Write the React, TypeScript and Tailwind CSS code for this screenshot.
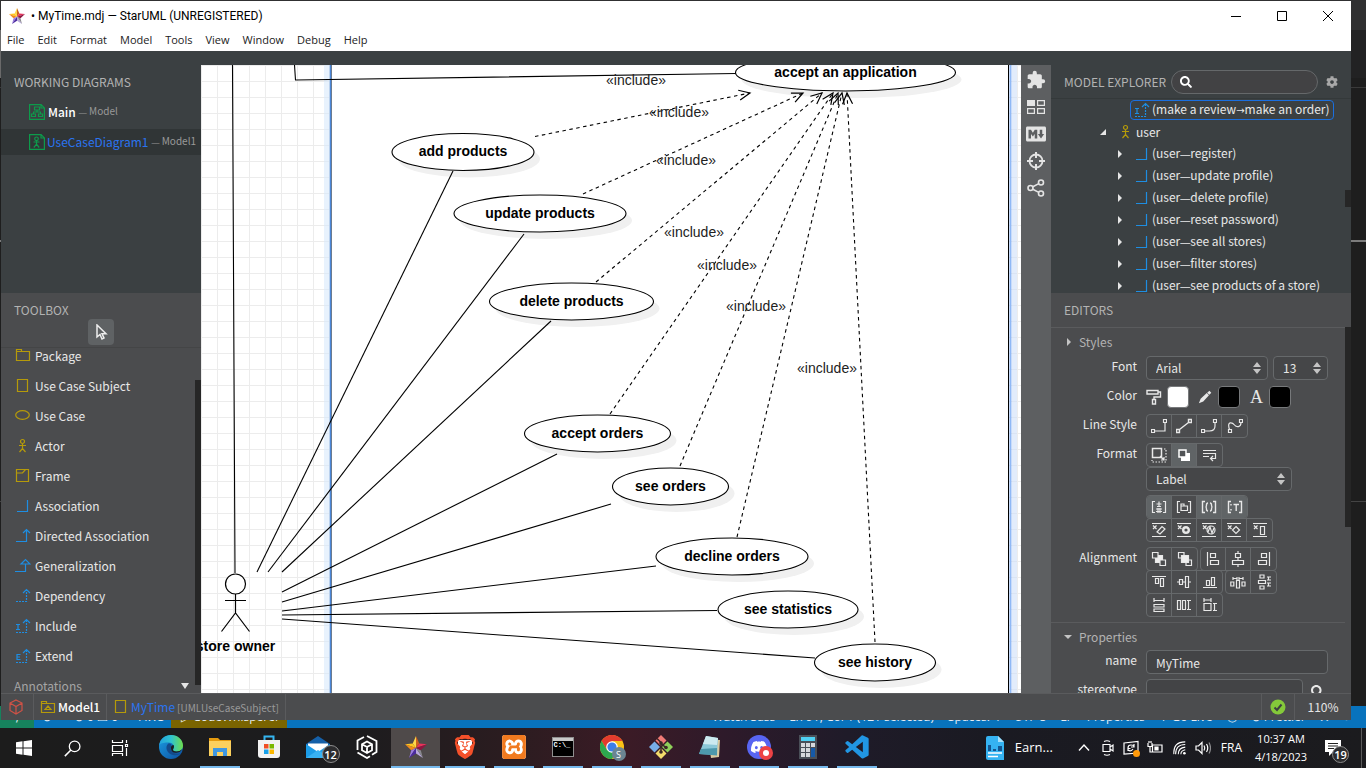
import React from "react";
import type { ReactNode } from "react";
import { FaSearch, FaCog } from "react-icons/fa";
import { MdExtension } from "react-icons/md";
import { SiBrave, SiXampp, SiDiscord } from "react-icons/si";
import { BiLogoVisualStudio } from "react-icons/bi";
import { IoLogoMarkdown } from "react-icons/io5";

const ui = "font-['Noto_Sans_CJK_SC',sans-serif]";
const sys = "font-['Open_Sans','Noto_Sans',sans-serif]";

function Svg({ className = "w-4 h-4", box = "0 0 16 16", children }: { className?: string; box?: string; children: ReactNode }) {
  return (
    <svg className={`shrink-0 ${className}`} viewBox={box} fill="none" stroke="currentColor" strokeWidth="1.2" aria-hidden="true">
      {children}
    </svg>
  );
}

/* Dashes and arrows take their proportional forms from a Latin font. */
function Label({ text, dash = "text-[10px]" }: { text: string; dash?: string }) {
  return (
    <>
      {text.split(/([—→])/).map((part, i) =>
        part === "—" || part === "→" ? (
          <span key={i} className={part === "—" ? `font-['Liberation_Sans',sans-serif] ${dash}` : "font-['DejaVu_Sans',sans-serif] text-[10px]"}>{part}</span>
        ) : (
          <React.Fragment key={i}>{part}</React.Fragment>
        ),
      )}
    </>
  );
}

function StarLogo({ className }: { className: string }) {
  return (
    <svg className={`shrink-0 ${className}`} viewBox="0 0 24 24" aria-hidden="true">
      <path d="M12 0 8.400 8.200 12 13Z" fill="#ffd84a" />
      <path d="M12 0 15.600 8.200 12 13Z" fill="#c9601e" />
      <path d="M0 9 8.400 8.200 12 13Z" fill="#ffc81e" />
      <path d="M0 9 12 13 6.800 15.500Z" fill="#f08a1c" />
      <path d="M6.800 15.500 12 13 4.500 24Z" fill="#9b7be0" />
      <path d="M4.500 24 12 13 12 19Z" fill="#4b2aa0" />
      <path d="M12 13 19.500 24 12 19Z" fill="#b8a8dc" />
      <path d="M12 13 17.200 15.500 19.500 24Z" fill="#8a8a90" />
      <path d="M24 9 15.600 8.200 12 13Z" fill="#e8325a" />
      <path d="M24 9 12 13 17.200 15.500Z" fill="#8d1640" />
    </svg>
  );
}

type Kind = "package" | "subject" | "usecase" | "actor" | "frame" | "association" | "directed" | "generalization" | "dependency" | "include" | "extend";

function ToolIcon({ kind, className = "w-4 h-4" }: { kind: Kind; className?: string }) {
  const shapes: Record<Kind, ReactNode> = {
    package: <path d="M1.500 12.500v-11h5v2h8v9zM1.500 3.500h5" />,
    subject: <path d="M2.500 1.500h10v12h-10z" />,
    usecase: <ellipse cx="7.500" cy="7" rx="6.800" ry="4.300" />,
    actor: <path d="M7.500 1.500a2 2 0 1 1 0 4 2 2 0 1 1 0-4M7.500 5.500v5M4 7.500h7M4.500 14l3-3.500 3 3.500" />,
    frame: <path d="M1.500 1.500h12v12h-12zM1.500 5h6l3-3.500" />,
    association: <path d="M2 13.500h10.500V2" />,
    directed: <path d="M1 13.500h10.500V1M8 5l3.500-3.500L15 5" />,
    generalization: <path d="M0 13.500h10.500V6M6 6l4.500-4.500L15 6z" />,
    dependency: (<><path d="M1 13.500h10.500V2" strokeDasharray="2 1" /><path d="M8 5l3.500-3.500L15 5" /></>),
    include: (<><path d="M1 14.500h10.500V2" strokeDasharray="2 1" /><path d="M8 5l3.500-3.500L15 5M1 6.500h4M3 6.500v5M1 11.500h4" /></>),
    extend: (<><path d="M1 14.500h10.500V2" strokeDasharray="2 1" /><path d="M8 5l3.500-3.500L15 5M5.500 6.500H2v5h3.500M2 9h3" /></>),
  };
  const yellow = ["package", "subject", "usecase", "actor", "frame"].includes(kind);
  return (
    <span className={yellow ? "text-[#b59a0a]" : "text-[#1e8ee2]"}>
      <Svg className={className}>{shapes[kind]}</Svg>
    </span>
  );
}

const tools: [Kind, string][] = [
  ["package", "Package"], ["subject", "Use Case Subject"], ["usecase", "Use Case"], ["actor", "Actor"], ["frame", "Frame"],
  ["association", "Association"], ["directed", "Directed Association"], ["generalization", "Generalization"],
  ["dependency", "Dependency"], ["include", "Include"], ["extend", "Extend"],
];

function LeftPanel() {
  return (
    <aside className="flex w-[200px] shrink-0 flex-col text-[12px] leading-5 text-[#e8e8e8]">
      <section className="h-[228px] shrink-0 bg-[#3b4042]">
        <h2 className="px-[13px] pt-[7px] pb-[7px] text-[#b3b3b3]">WORKING DIAGRAMS</h2>
        <ul>
          <li>
            <a href="#main" className="flex h-[26px] items-center whitespace-nowrap pl-7">
              <span className="text-[#0d9b4b]"><Svg className="w-4 h-4"><path d="M.6.6h11.500l3.300 3.300v11.500H.6zM12 .6v3.400h3.400M5.500 3h5v3h-5zM8 6v2M4.500 10V8h7v2M2.500 10h4v2.500h-4zM9.500 10h4v2.500h-4z" /></Svg></span>
              <span className="ml-[3px] font-medium text-white">Main</span>
              <span className="ml-[3px] text-[10px] text-[#999]"><Label text="— Model" dash="text-[8px]" /></span>
            </a>
          </li>
          <li>
            <a href="#usecase" className="mt-1 flex h-[26px] items-center whitespace-nowrap bg-[#303536] pl-7">
              <span className="text-[#0d9b4b]"><Svg className="w-4 h-4"><path d="M.6.6h11.500l3.300 3.300v11.500H.6zM12 .6v3.400h3.400M7.500 3a1.800 1.800 0 1 1 0 3.600 1.800 1.800 0 1 1 0-3.600M7.500 6.600v3.600M4.500 8h6M4.800 13.500l2.700-3.300 2.700 3.300" /></Svg></span>
              <span className="ml-[2px] text-[#2a74f0]">UseCaseDiagram1</span>
              <span className="ml-[3px] text-[10px] text-[#999]"><Label text="— Model1" dash="text-[8px]" /></span>
            </a>
          </li>
        </ul>
      </section>
      <section className="flex min-h-0 flex-1 flex-col bg-[#4b4c4e]">
        <div className="flex h-[55px] shrink-0 flex-col border-b border-[#444546]">
          <h2 className="px-[13px] pt-[7px] text-[#b3b3b3]">TOOLBOX</h2>
          <button aria-label="Select" className="-mt-px flex size-[26px] items-center justify-center self-center rounded bg-[#5f6264] text-[#eee]">
            <Svg className="w-4 h-4"><path d="M4 1v12l3-2.500 2 4.500 2-1-2-4.200h4z" strokeWidth="1.500" /></Svg>
          </button>
        </div>
        <div className="flex min-h-0 flex-1 overflow-hidden">
          <div className="-mt-[7px] flex-1">
            <ul>
              {tools.map(([kind, name]) => (
                <li key={name}>
                  <button className="flex h-[30px] w-full items-center gap-1 whitespace-nowrap pl-[14px]">
                    <ToolIcon kind={kind} /> <span>{name}</span>
                  </button>
                </li>
              ))}
            </ul>
            <button className="flex h-[30px] w-full items-center justify-between pl-[13px] pr-[6px] text-[#a5a5a5]">
              Annotations
              <svg className="w-2 h-2 text-[#e6e6e6]" viewBox="0 0 8 8" aria-hidden="true"><path d="M0 1h8L4 7z" fill="currentColor" /></svg>
            </button>
          </div>
          <div className="mt-8 mb-2 w-[6px] shrink-0 bg-[#262626]" />
        </div>
      </section>
    </aside>
  );
}

type Node = [string, number, number, number];
const nodes: Node[] = [
  ["accept an application", 845.5, 72.5, 110],
  ["add products", 463, 152, 71],
  ["update products", 540, 213.5, 86],
  ["delete products", 571.5, 301.5, 82],
  ["accept orders", 597.5, 433.5, 73],
  ["see orders", 670.5, 486.5, 58],
  ["decline orders", 732, 556.5, 76],
  ["see statistics", 788, 609.5, 70],
  ["see history", 875, 662.5, 60.5],
];
const links = [
  [257, 572, 453, 171], [268, 572, 524, 234], [282, 572, 551, 321], [282, 592, 557, 454],
  [282, 602, 611, 504], [282, 611, 656, 566], [282, 615, 717, 610.5], [282, 619, 815, 658],
];
const includes = [
  [535, 136.5, 750, 93, 636, 80], [583, 194, 803, 93, 679, 112], [596, 282, 822, 93, 686, 160], [610, 414, 833, 93, 694, 232],
  [680, 466, 838, 93, 727, 265], [737, 537, 842, 93, 756, 306], [875, 642, 847, 93, 827, 368],
];

function Canvas() {
  return (
    <main className="min-w-0 flex-1 overflow-hidden bg-white">
      <svg className="h-[628px] w-[820px]" viewBox="201 65 820 628" fontFamily="'Liberation Sans', Arial, sans-serif" fontSize="14" role="img" aria-label="Use case diagram">
        <defs>
          <pattern id="grid" x="217" y="81" width="16" height="16" patternUnits="userSpaceOnUse">
            <path d="M.5 0V16M0 .5H16" stroke="#ececec" />
          </pattern>
          <marker id="open" viewBox="-14 -7 16 14" markerWidth="16" markerHeight="14" refX="0" refY="0" markerUnits="userSpaceOnUse" orient="auto">
            <path d="M-11-5 0 0-11 5" fill="none" stroke="#000" strokeWidth="1.200" />
          </marker>
        </defs>
        <rect x="201" y="65" width="820" height="628" fill="#fff" />
        <rect x="201" y="65" width="820" height="628" fill="url(#grid)" />
        <rect x="324" y="65" width="7" height="628" fill="#d8eafb" opacity=".6" />
        <rect x="331" y="65" width="678" height="628" fill="#fff" />
        <rect x="1012" y="65" width="5" height="628" fill="#cfe0f8" opacity=".6" />
        <path d="M331.500 65v628" stroke="#777" />
        <path d="M330.500 65v628" stroke="#4a86d8" strokeWidth="1.500" />
        <path d="M1010.500 65v628" stroke="#8fb8f5" strokeWidth="2" />
        <path d="M1008.500 65v628" stroke="#000" />
        {nodes.map(([name, x, y, rx]) => <ellipse key={name} cx={x + 6} cy={y + 7} rx={rx} ry="18.500" fill="#f0f0f0" />)}
        <g fill="none" stroke="#000" strokeWidth="1.100">
          <path d="M232.500 65 235 573M294.500 65 295.500 80 736 73.500" />
          {links.map(([a, b, c, d]) => <line key={d} x1={a} y1={b} x2={c} y2={d} />)}
        </g>
        {nodes.map(([name, x, y, rx]) => (
          <g key={name}>
            <ellipse cx={x} cy={y} rx={rx} ry="18.500" fill="#fff" stroke="#000" strokeWidth="1.100" />
            <text x={x} y={y + 4} textAnchor="middle" fontWeight="bold">{name}</text>
          </g>
        ))}
        {includes.map(([a, b, c, d, tx, ty]) => (
          <g key={tx}>
            <line x1={a} y1={b} x2={c} y2={d} stroke="#000" strokeWidth="1.100" strokeDasharray="3.500 3.500" markerEnd="url(#open)" />
            <text x={tx} y={ty + 5} textAnchor="middle" fill="#222">«include»</text>
          </g>
        ))}
        <g fill="none" stroke="#000" strokeWidth="1.200">
          <circle cx="235.500" cy="584" r="10" fill="#fff" />
          <path d="M235.500 594v19M225 600.500h21M221.500 631.500l14-18.500 14 18.500" />
        </g>
        <text x="235.500" y="651" textAnchor="middle" fontWeight="bold">store owner</text>
      </svg>
    </main>
  );
}

function ToolStrip() {
  const b = "flex h-[27px] w-full items-center justify-center";
  return (
    <nav className="flex w-[30px] shrink-0 flex-col bg-[#5d5f61] pt-px text-[#e4e4e4]" aria-label="Views">
      <button className={b} aria-label="Extensions"><MdExtension className="size-5" /></button>
      <button className={b} aria-label="Thumbnails"><Svg className="w-[18px] h-[14px]" box="0 0 18 14"><path d="M0 0h8v6H0z" fill="currentColor" stroke="none" /><path d="M10.600.6h6.800v4.800h-6.800zM.6 8.600h6.800v4.800H.6zM10.600 8.600h6.800v4.800h-6.800z" /></Svg></button>
      <button className={b} aria-label="Documentation"><IoLogoMarkdown className="size-5" /></button>
      <button className={b} aria-label="Minimap"><Svg className="w-[18px] h-[18px]" box="0 0 18 18"><circle cx="9" cy="9" r="6.500" strokeWidth="1.800" /><path d="M9 0v6M9 12v6M0 9h6M12 9h6" strokeWidth="2" /></Svg></button>
      <button className={b} aria-label="Relationships"><Svg className="w-[18px] h-[18px]" box="0 0 18 18"><circle cx="3.500" cy="9" r="2.500" strokeWidth="1.600" /><circle cx="14" cy="3.500" r="2.500" strokeWidth="1.600" /><circle cx="14" cy="14.500" r="2.500" strokeWidth="1.600" /><path d="M5.800 7.800l6-3.200M5.800 10.200l6 3.200" strokeWidth="1.600" /></Svg></button>
    </nav>
  );
}

const relations = ["register", "update profile", "delete profile", "reset password", "see all stores", "filter stores", "see products of a store"];

function Explorer() {
  return (
    <section className="flex h-[228px] shrink-0 flex-col bg-[#3b4042]">
      <div className="flex h-[34px] shrink-0 items-center border-b border-[#34393a] pl-[13px] pr-[13px] text-[#b3b3b3]">
        <h2 className="shrink-0 whitespace-nowrap">MODEL EXPLORER</h2>
        <label className="ml-[5px] flex h-6 min-w-0 flex-1 items-center rounded-full border border-[#65686a] bg-[#424244] pl-2 text-white">
          <FaSearch className="size-3 shrink-0" />
          <input aria-label="Search" className="ml-2 min-w-0 flex-1 bg-transparent outline-none" />
        </label>
        <button aria-label="Settings" className="ml-2 text-[#a8a8a8]"><FaCog className="size-3" /></button>
      </div>
      <div className="flex min-h-0 flex-1 overflow-hidden">
        <ul className="min-w-0 flex-1 whitespace-nowrap">
          <li className="flex h-[22px] items-center pl-[79px]">
            <button className="flex h-5 items-center gap-[2px] rounded-sm border border-[#1a6fe0] px-[3px]"><ToolIcon kind="include" /><span><Label text="(make a review→make an order)" /></span></button>
          </li>
          <li className="flex h-[22px] items-center pl-[49px]">
            <svg className="h-[6px] w-[6px]" viewBox="0 0 6 6" aria-hidden="true"><path d="M6 0v6H0z" fill="#e6e6e6" /></svg>
            <span className="ml-3"><ToolIcon kind="actor" /></span><span className="ml-[2px]">user</span>
          </li>
          {relations.map((r) => (
            <li key={r} className="flex h-[22px] items-center pl-[67px]">
              <svg className="h-2 w-1" viewBox="0 0 4 8" aria-hidden="true"><path d="M0 0l4 4-4 4z" fill="#e6e6e6" /></svg>
              <span className="ml-3"><ToolIcon kind="association" /></span>
              <span className="ml-[2px]"><Label text={`(user—${r})`} /></span>
            </li>
          ))}
        </ul>
        <div className="mt-[91px] h-[17px] w-[6px] shrink-0 bg-[#262626]" />
      </div>
    </section>
  );
}

function Row({ label, children }: { label: string; children: ReactNode }) {
  return (
    <div className="flex">
      <span className="w-[86px] shrink-0 text-right">{label}</span>
      <div className="ml-[9px] flex min-w-0 flex-1 flex-col">{children}</div>
    </div>
  );
}

function Picker({ label, value, className }: { label: string; value: string; className: string }) {
  return (
    <div className={`relative h-6 ${className}`}>
      <select aria-label={label} className="h-full w-full appearance-none rounded border border-[#66696b] bg-[#454648] pl-[9px] text-[#e6e6e6]" defaultValue={value}>
        <option>{value}</option>
      </select>
      <svg className="pointer-events-none absolute right-[7px] top-[6px] h-3 w-2" viewBox="0 0 8 12" aria-hidden="true"><path d="M0 5l4-5 4 5zM0 7l4 5 4-5z" fill="#c4c4c4" /></svg>
    </div>
  );
}

type Tool = { name: string; on?: boolean; icon: ReactNode };
function Group({ items }: { items: Tool[] }) {
  return (
    <div className="flex h-6 divide-x divide-[#66696b] overflow-hidden rounded border border-[#66696b]">
      {items.map((t) => (
        <button key={t.name} aria-label={t.name} className={`flex w-[25px] items-center justify-center ${t.on ? "bg-[#606466]" : ""}`}>
          <Svg className="w-4 h-4">{t.icon}</Svg>
        </button>
      ))}
    </div>
  );
}

const bar = "M1 1.500h14M1 14.500h14M2 3.500l3.500 3.500M5.500 3.500 2 7";
const lineTools: Tool[] = [
  { name: "Rectilinear", icon: <path d="M.5 11.500h3v3h-3zM12.500 1.500h3v3h-3zM3.500 13h10.500V4.500" /> },
  { name: "Oblique", icon: <path d="M.5 11.500h3v3h-3zM12.500 1.500h3v3h-3zM3.500 11.500l9-7" strokeWidth="1.400" /> },
  { name: "Rounded", icon: <path d="M.5 11.500h3v3h-3zM12.500 1.500h3v3h-3zM3.500 13h5q5.500 0 5.500-5V4.500" /> },
  { name: "Curve", icon: <path d="M1.500 11.500h3v3h-3zM12.500 1.500h3v3h-3zM2.500 11.500c-3-9 3-7 5-4.500s6.500 2.500 6.500-2.500" /> },
];
const formatTools: Tool[] = [
  { name: "Auto resize", icon: (<><path d="M1.500 1.500h9v9h-9z" strokeWidth="1.500" /><path d="M13 2h2v13H1v-2" strokeDasharray="1.500 1.500" /><path d="M9 9l4 4M13 10v3h-3" /></>) },
  { name: "Shadow", on: true, icon: (<><path d="M5 6h9v8H5z" fill="#fff" stroke="none" /><path d="M3 3h7v7H3z" fill="#505355" stroke="#fff" strokeWidth="1.500" /></>) },
  { name: "Word wrap", icon: <path d="M1 3.500h13M1 6.500h12.500v5H9M1 9.500h6M11 9l-2.500 2.500L11 14" /> },
];
const showTools: Tool[] = [
  { name: "Show visibility", on: true, icon: <path d="M4 2.500H1.500v11H4M12 2.500h2.500v11H12M8 2.500v5M5.500 5h5M6 7.500h4M5 10h6M5 12.500h6M7 9v5M9 9v5" /> },
  { name: "Show namespace", icon: <path d="M4 2.500H1.500v11H4M12 2.500h2.500v11H12M5 11.500V5h3v2h3.500v4.500zM5 7h3" /> },
  { name: "Show property", on: true, icon: <path d="M4 2.500H1.500v11H4M12 2.500h2.500v11H12M7 4q-1.500 0-1.500 2T4.500 8q1 0 1 2T7 12M9 4q1.500 0 1.500 2T11.500 8q-1 0-1 2T9 12" strokeWidth="1.400" /> },
  { name: "Show type", on: true, icon: <path d="M4 2.500H1.500v11H4M12 2.500h2.500v11H12M6.500 5.500h5.500M9.200 5.500V12M4 5v1.500M4 10v1.500" strokeWidth="1.400" /> },
];
const suppressTools: Tool[] = [
  { name: "Suppress attributes", icon: <><path d={bar} /><path d="M6 10l5-5.500 3 2.500-5 5z" /></> },
  { name: "Suppress operations", icon: <><path d={bar} /><circle cx="10" cy="8" r="2.800" strokeWidth="2.400" /></> },
  { name: "Suppress receptions", icon: <><path d={bar} /><circle cx="10" cy="8" r="4" /><path d="M7 10l2-5 2 6 2-5" /></> },
  { name: "Suppress literals", icon: <><path d={bar} /><path d="M10 4.500 13.500 8 10 11.500 6.500 8z" /></> },
  { name: "Suppress columns", icon: <><path d={bar} /><path d="M8.500 4.500h4v8h-4z" /></> },
];
const orderTools: Tool[] = [
  { name: "Send to back", icon: <><path d="M4.500 4.500h7v7h-7z" fill="#eee" /><path d="M1.500 1.500h5.500v5.500H1.500zM9 9h5.500v5.500H9z" fill="#4b4c4e" /></> },
  { name: "Bring to front", icon: <><path d="M1.500 1.500h5.500v5.500H1.500zM9 9h5.500v5.500H9z" /><path d="M4.500 4.500h7v7h-7z" fill="#eee" /></> },
];
const alignH: Tool[] = [
  { name: "Align left", icon: <path d="M2.500 1v14M5.500 2.500h5v4h-5zM5.500 9.500h8v4h-8z" /> },
  { name: "Align center", icon: <path d="M8 0v2.500M8 6.500v3M8 13.500V16M5.500 2.500h5v4h-5zM2.500 9.500h11v4h-11z" /> },
  { name: "Align right", icon: <path d="M13.500 1v14M5.500 2.500h5v4h-5zM2.500 9.500h8v4h-8z" /> },
];
const alignV: Tool[] = [
  { name: "Align top", icon: <path d="M1 2.500h14M4.500 4.500h3v5h-3zM9.500 4.500h3v8h-3z" /> },
  { name: "Align middle", icon: <path d="M1 8h2M7 8h2.500M13 8h2M3.500 5.500h3v5h-3zM9.500 2.500h3v11h-3z" /> },
  { name: "Align bottom", icon: <path d="M1 13.500h14M4.500 6.500h3v5h-3zM9.500 3.500h3v8h-3z" /> },
];
const space: Tool[] = [
  { name: "Space horizontally", icon: <path d="M.8 8h3v4h-3zM6.500 6.500h3V14h-3zM12 8h3v4h-3zM3 4.500h4M9 4.500h4M3 3v3M7 3v3M9 3v3M13 3v3" /> },
  { name: "Space vertically", icon: <path d="M4 1h4v3H4zM2.500 6.500h7v3h-7zM4 12h4v3H4zM11 3h4M11 6h4M11 9h4M11 12h4M12.500 3v3M12.500 9v3" /> },
];
const sizes: Tool[] = [
  { name: "Same width", icon: <path d="M3 7.500h10v2.500H3zM3 12h10v2.500H3zM3 3.500h10M3 1v4M13 1v4" /> },
  { name: "Same height", icon: <path d="M1.500 3.500h3v9h-3zM6.500 3.500h3v9h-3zM11 3.500h4M11 12.500h4M12.500 3.500v9" /> },
  { name: "Same size", icon: <path d="M2 6.500h7v7H2zM2 1v4M9 1v4M2 3h7M11 6.500h4M11 13.500h4M12.500 6.500v7" /> },
];

function Editors() {
  const swatch = "size-[22px] rounded border border-[#77797b]";
  return (
    <section className="flex min-h-0 flex-1 flex-col bg-[#4b4c4e]">
      <h2 className="h-[34px] shrink-0 px-[13px] pt-[7px] text-[#b3b3b3]">EDITORS</h2>
      <div className="flex min-h-0 flex-1 overflow-hidden">
        <div className="min-w-0 flex-1 border-t border-[#5a5b5d]">
          <button className="flex h-[28px] items-center gap-2 pl-4 text-[#b3b3b3]">
            <svg className="h-2 w-1" viewBox="0 0 4 8" aria-hidden="true"><path d="M0 0l4 4-4 4z" fill="#c4c4c4" /></svg>Styles
          </button>
          <div className="flex flex-col gap-[5px]">
            <Row label="Font"><div className="flex gap-[5px]"><Picker label="Font" value="Arial" className="w-[122px]" /><Picker label="Font size" value="13" className="w-[55px]" /></div></Row>
            <Row label="Color">
              <div className="flex h-6 items-center">
                <Svg className="w-4 h-4"><path d="M1 1.500h11v3.500H1zM12 3h2.500v5H8v2.500M6.500 10.500h3V15h-3z" strokeWidth="1.400" /></Svg>
                <button aria-label="Fill color" className={`ml-[5px] bg-white ${swatch}`} />
                <span className="ml-[9px]"><Svg className="w-[14px] h-[14px]"><path d="M1 15l2-5 7-6.500L12.500 6 6 13zM10.500 3 13 .800 15.200 3 13 5.500z" fill="currentColor" stroke="none" /></Svg></span>
                <button aria-label="Line color" className={`ml-[6px] bg-black ${swatch}`} />
                <span className="ml-[9px] w-[15px] text-center font-['Liberation_Serif',serif] text-[18px] leading-5">A</span>
                <button aria-label="Font color" className={`ml-[5px] bg-black ${swatch}`} />
              </div>
            </Row>
            <Row label="Line Style"><div className="flex"><Group items={lineTools} /></div></Row>
            <Row label="Format">
              <div className="flex"><Group items={formatTools} /></div>
              <Picker label="Stereotype display" value="Label" className="w-[146px]" />
              <div className="mt-1 flex"><Group items={showTools} /></div>
              <div className="-mt-px flex"><Group items={suppressTools} /></div>
            </Row>
            <Row label="Alignment">
              <div className="flex gap-[2px]"><Group items={orderTools} /><Group items={alignH} /></div>
              <div className="-mt-px flex gap-[2px]"><Group items={alignV} /><Group items={space} /></div>
              <div className="-mt-px flex"><Group items={sizes} /></div>
            </Row>
          </div>
          <div className="mt-[5px] flex h-[28px] items-center gap-[7px] border-t border-[#5a5b5d] pl-[13px] text-[#b3b3b3]">
            <svg className="h-1 w-2" viewBox="0 0 8 4" aria-hidden="true"><path d="M0 0h8L4 4z" fill="#c4c4c4" /></svg>Properties
          </div>
          <div className="flex flex-col gap-[5px]">
            <Row label="name"><input aria-label="name" defaultValue="MyTime" className="h-6 w-[182px] rounded border border-[#66696b] bg-[#434446] px-[9px]" /></Row>
            <Row label="stereotype"><div className="flex items-center gap-2"><input aria-label="stereotype" className="h-6 w-[157px] rounded border border-[#66696b] bg-[#434446] px-2" /><FaSearch className="size-[13px]" /></div></Row>
          </div>
        </div>
        <div className="h-[200px] w-[6px] shrink-0 bg-[#262626]" />
      </div>
    </section>
  );
}

function StatusBar() {
  const cell = "flex h-full items-center border-r border-[#5a5b5d]";
  return (
    <footer className="flex h-[27px] shrink-0 items-center whitespace-nowrap border-t border-[#5a5b5d] bg-[#4b4c4e] text-[12px] text-[#e6e6e6]">
      <div className={`${cell} w-[33px] pl-[7px] text-[#cf5246]`}><Svg className="w-4 h-4"><path d="M8 1l6 3v7.500L8 15l-6-3.500V4zM2 4l6 3.500L14 4M8 7.500V15" /></Svg></div>
      <a href="#model" className={`${cell} px-[6px]`}>
        <span className="text-[#b59a0a]"><Svg className="w-4 h-4"><path d="M1.500 13.500v-11h5v2h8v9zM1.500 4.500h6M5 10.500h6L8 7z" /></Svg></span>
        <span className="ml-[2px] font-medium text-white">Model1</span>
      </a>
      <a href="#mytime" className={`${cell} px-[6px]`}>
        <ToolIcon kind="subject" /><span className="ml-[2px] text-[#2a74f0]">MyTime</span><span className="ml-[2px] text-[10px] text-[#999]">[UMLUseCaseSubject]</span>
      </a>
      <div className="ml-auto flex h-full w-[33px] items-center justify-center border-l border-[#5a5b5d]">
        <svg className="h-4 w-4" viewBox="0 0 16 16" role="img" aria-label="Valid"><circle cx="8" cy="8" r="7.500" fill="#84c93a" /><path d="M4.500 8.500 7 11l4.500-5.500" fill="none" stroke="#3c4040" strokeWidth="2" /></svg>
      </div>
      <div className="flex h-full w-[57px] items-center justify-center border-l border-[#5a5b5d]">110%</div>
    </footer>
  );
}

function StarWindow() {
  return (
    <div className={`absolute bottom-2 left-px right-[15px] top-px flex flex-col overflow-hidden bg-white ${ui}`}>
      <header className="flex h-[29px] shrink-0 items-center pl-2 font-['Roboto',sans-serif] text-black">
        <StarLogo className="h-4 w-4" />
        <h1 className="ml-[6px] whitespace-nowrap text-[12px]">• MyTime.mdj — StarUML (UNREGISTERED)</h1>
        <div className="ml-auto flex h-full">
          <button aria-label="Minimize" className="flex w-[46px] items-center justify-center"><Svg className="w-[10px] h-[10px]" box="0 0 10 10"><path d="M0 5.500h10" strokeWidth="1" /></Svg></button>
          <button aria-label="Maximize" className="flex w-[46px] items-center justify-center"><Svg className="w-[10px] h-[10px]" box="0 0 10 10"><path d="M.5.5h9v9h-9z" strokeWidth="1" /></Svg></button>
          <button aria-label="Close" className="flex w-[46px] items-center justify-center"><Svg className="w-[10px] h-[10px]" box="0 0 10 10"><path d="M0 0l10 10M10 0 0 10" strokeWidth="1" /></Svg></button>
        </div>
      </header>
      <nav className={`flex h-[21px] shrink-0 items-center gap-[13px] pl-[6px] text-[11px] text-[#222] ${sys}`}>
        {["File", "Edit", "Format", "Model", "Tools", "View", "Window", "Debug", "Help"].map((m) => <button key={m}>{m}</button>)}
      </nav>
      <div className="h-[14px] shrink-0 bg-[#3b4042]" />
      <div className="flex min-h-0 flex-1">
        <LeftPanel />
        <Canvas />
        <ToolStrip />
        <aside className="flex w-[300px] shrink-0 flex-col text-[12px] leading-5 text-[#e8e8e8]"><Explorer /><Editors /></aside>
      </div>
      <StatusBar />
    </div>
  );
}

function EditorBackdrop() {
  return (
    <div className={`flex h-full flex-col bg-[#1e1e1e] ${sys}`}>
      <div className="h-[30px] shrink-0 bg-[#303031]" />
      <div className="h-12 shrink-0 bg-[linear-gradient(to_right,#6a6a6a_2px,#222223_2px)]" />
      <div className="h-[10px] shrink-0 border-b border-[#3a3a3a] bg-[#1e1e1e]" />
      <div className="h-[154px] shrink-0 border-b-2 border-[#7c7c7c]" />
      <div className="h-[260px] shrink-0 border-b border-[#444]" />
      <div className="flex-1" />
      <footer className="flex h-[22px] shrink-0 items-center whitespace-nowrap bg-[#0873bd] text-[12px] leading-[22px] text-[#e8eef4]">
        <span className="flex h-full w-[34px] items-center justify-center bg-[#16825d]">⟩</span>
        <span className="ml-2 w-8">⊕</span>
        <span className="w-[65px]">⊗ 0 ⚠ 0</span>
        <span className="w-8">AWS</span>
        <span className="flex h-full w-[116px] items-center bg-[#7a6400] pl-[10px]">▷ CodeWhisperer</span>
        <span className="ml-3">✎</span>
        <div className="ml-auto flex items-center gap-[14px] pr-4">
          <span>Watch Sass</span><span>Ln 91, Col 1 (121 selected)</span><span>Spaces: 4</span><span>UTF-8</span><span>LF</span><span>Properties</span><span>Ψ Go Live</span><span>◎</span><span>⊘ Prettier</span><span>⋏</span><span>●</span>
        </div>
      </footer>
    </div>
  );
}

function TaskApp({ name, running, active, children }: { name: string; running?: boolean; active?: boolean; children: ReactNode }) {
  return (
    <button aria-label={name} className={`flex h-10 w-[49px] shrink-0 flex-col items-center ${active ? "bg-[#4f4a4a]" : ""}`}>
      <span className="flex flex-1 items-center">{children}</span>
      <span className={`h-[2px] ${active ? "w-full" : "w-10"} ${running || active ? "bg-[#76b9ed]" : ""}`} />
    </button>
  );
}

const art = "h-6 w-6 shrink-0";
function Taskbar() {
  return (
    <footer className={`flex h-10 shrink-0 items-center bg-[linear-gradient(to_right,#1c1c1c_0%,#1c1c1e_26%,#2c1c20_38%,#3b1b26_46%,#2e1a2a_53%,#1f1b29_62%,#1a1a22_72%,#1b1b1e_100%)] text-white ${sys}`}>
      <button aria-label="Start" className="flex w-12 justify-center"><Svg className="w-4 h-4"><path d="M0 2.200l6.500-.9v6.200H0zM7.500 1.200 16 0v7.500H7.500zM0 8.500h6.500v6.200L0 13.800zM7.500 8.500H16V16l-8.500-1.200z" fill="#fff" stroke="none" /></Svg></button>
      <button aria-label="Search" className="flex w-12 justify-center"><Svg className="w-[17px] h-[17px]"><circle cx="10" cy="6" r="5" /><path d="M6.500 9.500.8 15.200" strokeWidth="1.400" /></Svg></button>
      <button aria-label="Task view" className="mr-[2px] flex w-12 justify-center"><Svg className="w-[18px] h-4" box="0 0 18 16"><path d="M1.500 0v2.500h10V0M1.500 5.500h10v6h-10zM1.500 16v-2.500h10V16M15.500 0v3M15.500 8v8M14.500 4.500h2v2h-2z" /></Svg></button>
      <TaskApp name="Edge">
        <svg className={art} viewBox="0 0 24 24"><defs><linearGradient id="edge-top" x1="0" x2="1"><stop stopColor="#22a0de" /><stop offset=".5" stopColor="#2fc3d0" /><stop offset="1" stopColor="#6fdd4b" /></linearGradient><linearGradient id="edge-low" x1="0" x2="1" y2="1"><stop stopColor="#1b9de2" /><stop offset="1" stopColor="#0c4fa0" /></linearGradient></defs><circle cx="12" cy="12" r="12" fill="url(#edge-low)" /><path d="M0 10.500C1 4 6 0 12 0c7 0 12 5 12 10.500 0 4-3 6-6.500 6-3 0-4.200-1.200-3.200-2.500 2.200-3-.8-6.500-4.500-6.500S2 7.500 0 10.500z" fill="url(#edge-top)" /><path d="M9.500 8.500c-4 3-2 10 4.500 11.500 3.500.8 6.500-.5 8.500-2-2 1-9 1.500-10.500-3.500-.6-2 .8-3.500.5-4.500s-2-2-3-1.500z" fill="#134b8c" /><path d="M12 13.500c-.5-2 1-3.500 2.500-3.500 1 1.500.2 3-.3 4-.8 1.500.6 2.500 3.300 2.500 2 0 4-.7 5.500-2.500-1 3-4 4-6.500 3.800-3 0-4.300-2-4.500-4.300z" fill="#1c1c1c" /></svg>
      </TaskApp>
      <TaskApp name="File Explorer" running>
        <svg className={art} viewBox="0 0 24 24"><path d="M1 3h9l2 2h11v16H1z" fill="#e59b0f" /><path d="M1 6h22v15H1z" fill="#fbd05e" /><path d="M5 21v-8h14v8h-4v-4H9v4z" fill="#3f97e0" /></svg>
      </TaskApp>
      <TaskApp name="Store">
        <svg className={art} viewBox="0 0 24 24"><path d="M7.500 6V1.500h9V6" fill="none" stroke="#35b5f0" strokeWidth="2" /><path d="M1 5h22v15q0 3-3 3H4q-3 0-3-3z" fill="#f2f2f2" /><path d="M7 9h4.500v4.500H7z" fill="#f04e24" /><path d="M12.500 9H17v4.500h-4.500z" fill="#7ab800" /><path d="M7 14.500h4.500V19H7z" fill="#18a0ea" /><path d="M12.500 14.500H17V19h-4.500z" fill="#fcb800" /></svg>
      </TaskApp>
      <TaskApp name="Mail">
        <span className="relative flex">
          <svg className="h-6 w-6" viewBox="0 0 24 24"><path d="M0 9 12 1l12 8v14H0z" fill="#1560a8" /><path d="M2 8.500h20V14l-10 5-10-5z" fill="#fff" /><path d="M0 9l12 8 12-8v14H0z" fill="#1c9ce8" /><path d="M0 23 12 15l12 8z" fill="#38b2f4" /></svg>
          <span className="absolute -bottom-1 -right-[10px] flex size-[18px] items-center justify-center rounded-full border border-[#8b8b8b] bg-[#2c2c2e] text-[11px] font-semibold leading-none">12</span>
        </span>
      </TaskApp>
      <TaskApp name="Package manager">
        <Svg className="h-6 w-6" box="0 0 24 24"><path d="M12 6.500l5 2.800v6L12 18l-5-2.700v-6zM7 9.300l5 2.700 5-2.700M12 12v6" strokeWidth="1.800" /><path d="M9 2 2.500 5.500V15M12 1l9.500 5v11L17 19.800M2.500 17.500 12 23l3-1.800" strokeWidth="1.800" /></Svg>
      </TaskApp>
      <TaskApp name="StarUML" active><StarLogo className="h-[22px] w-[22px]" /></TaskApp>
      <TaskApp name="Brave" running><span className="relative flex"><span className="absolute inset-[5px] bg-white" /><SiBrave className="relative h-6 w-6 text-[#f4502a]" /></span></TaskApp>
      <TaskApp name="XAMPP" running><span className="flex rounded-[3px] bg-white"><SiXampp className="h-6 w-6 text-[#f17a1f]" /></span></TaskApp>
      <TaskApp name="Command Prompt" running>
        <span className="flex h-5 w-[22px] flex-col border border-[#8f8f8f] bg-black"><span className="h-[3px] bg-[#c9c9c9]" /><span className="px-px text-left font-['Liberation_Mono',monospace] text-[7px] font-bold leading-[9px]">C:\_</span></span>
      </TaskApp>
      <TaskApp name="Chrome" running>
        <span className="relative flex">
          <svg className="h-6 w-6" viewBox="0 0 24 24"><circle cx="12" cy="12" r="12" fill="#fbc116" /><path d="M1.600 6A12 12 0 0 1 22.400 6H12L7 15z" fill="#e33b2e" /><path d="M1.600 6A12 12 0 0 0 12 24l5.200-9H7z" fill="#2da94f" /><circle cx="12" cy="12" r="5.800" fill="#fff" /><circle cx="12" cy="12" r="4.600" fill="#3d7ee8" /></svg>
          <span className="absolute -bottom-[2px] -right-[2px] flex size-[14px] items-center justify-center rounded-full bg-[#6b8592] text-[9px] leading-none">S</span>
        </span>
      </TaskApp>
      <TaskApp name="Git Bash" running>
        <svg className={art} viewBox="0 0 24 24"><path d="M12 0l5.500 5.500L12 11 6.500 5.500z" fill="#f07a76" /><path d="M5.500 6.500 11 12l-5.500 5.500L0 12z" fill="#78aee8" /><path d="M18.500 6.500 24 12l-5.500 5.500L13 12z" fill="#8fd05a" /><path d="M12 13l5.500 5.500L12 24l-5.500-5.500z" fill="#f4dc6c" /><path d="M8 3.500l4 4v10M12 8l5 5" fill="none" stroke="#3a2626" strokeWidth="1.500" /><circle cx="12" cy="8" r="1.800" fill="#3a2626" /><circle cx="12" cy="17" r="1.800" fill="#3a2626" /><circle cx="17" cy="12.500" r="1.800" fill="#3a2626" /></svg>
      </TaskApp>
      <TaskApp name="Notepad" running>
        <svg className={art} viewBox="0 0 24 24"><path d="M10 4l12 1-1 17-8 1z" fill="#d9c9a0" /><path d="M8 1l12 2-1 17-18-1z" fill="#8cc8d8" /><path d="M8 1l12 2-1 7L5 9z" fill="#cdeaf0" /><path d="M3 14l16-1v7.500L1 19z" fill="#4d98ac" /></svg>
      </TaskApp>
      <TaskApp name="Discord" running>
        <span className="relative flex size-6 items-center justify-center rounded-full bg-[#5865f2]"><SiDiscord className="size-4" /><span className="absolute -bottom-px -right-[2px] flex size-[14px] items-center justify-center rounded-full bg-[#ed4245]"><span className="size-[6px] rounded-full bg-white" /></span></span>
      </TaskApp>
      <TaskApp name="Calculator" running>
        <svg className={art} viewBox="0 0 24 24"><path d="M3 0h18v24H3z" fill="#4a4f58" /><path d="M5 2h14v4H5z" fill="#4fd0f4" /><path d="M5 8h4v4H5zM10 8h4v4h-4zM15 8h4v4h-4zM5 13h4v4H5zM10 13h4v4h-4zM5 18h4v4H5zM10 18h4v4h-4z" fill="#d6d8dc" /><path d="M15 13h4v9h-4z" fill="#1659a8" /></svg>
      </TaskApp>
      <TaskApp name="Visual Studio Code" running><BiLogoVisualStudio className="h-7 w-7 text-[#2196e3]" /></TaskApp>
      <div className="ml-auto flex h-10 shrink-0 items-center whitespace-nowrap text-[12px]">
        <svg className="h-6 w-[18px]" viewBox="0 0 18 24" aria-hidden="true"><path d="M0 2q0-2 2-2h10l6 6v18H2q-2 0-2-2z" fill="#35b3f2" /><path d="M12 0l6 6h-6z" fill="#a6e0fb" /><path d="M2 9h3v6H2zM7 13h3v2H7zM12 10h4v5h-4z" fill="#14558f" /><path d="M2 17h14M2 20.500h10" stroke="#fff" strokeWidth="1.500" /></svg>
        <span className="ml-[11px] w-[63px] text-[13px]">Earn...</span>
        <Svg className="w-3 h-3" box="0 0 12 12"><path d="M1 8.500l5-5.500 5 5.500" strokeWidth="1.400" /></Svg>
        <span className="ml-3"><Svg className="w-3 h-4" box="0 0 12 16"><path d="M1 4.500h7v7H1zM8 7l3-2v6L8 9M2 1.500Q5 0 8 1.500M2 14.500q3 1.500 6 0" /></Svg></span>
        <span className="relative ml-[9px] flex"><Svg className="w-4 h-4"><path d="M1 3l14-1.500V13L1 14zM5 8q0-3 3-3t3 1.500M11 4v3H8M5 11V8.500h2.500M5 10q3 2 5-1" /></Svg><span className="absolute -bottom-px -right-px size-[7px] rounded-full bg-[#ff9a0a]" /></span>
        <span className="ml-2"><Svg className="w-4 h-4"><path d="M5.500 5H15v7H5.500zM1 3v3.500h4V3M2 1v2M4 1v2M3 6.500V12h3" /><path d="M8 7h3v3H8z" fill="#fff" /></Svg></span>
        <span className="ml-[10px]"><Svg className="w-[14px] h-[14px]"><path d="M9 15q0-4 5-5M6 15q0-7 8-8M3 15Q3 4 14 4M1 15Q0 1 14 1" /><circle cx="13" cy="14" r="1.500" fill="#fff" stroke="none" /></Svg></span>
        <span className="ml-2"><Svg className="w-4 h-4"><path d="M1 6h2.500L7 2.500v11L3.500 10H1zM9 5.500q1.500 2.500 0 5M11.500 4q2.500 4 0 8" /><path d="M14 2.500q3 5.500 0 11" opacity=".5" /></Svg></span>
        <span className="ml-[10px]">FRA</span>
        <span className="ml-3 flex w-[54px] flex-col items-center text-[11px] leading-[18px]"><span>10:37 AM</span><span>4/18/2023</span></span>
        <span className="relative ml-[17px] mr-[20px] flex"><svg className="h-4 w-4" viewBox="0 0 16 16" aria-hidden="true"><path d="M0 0h16v12H8l-4 4v-4H0z" fill="#fff" /><path d="M3 3.500h10M3 6h10M3 8.500h6" stroke="#222" /></svg><span className="absolute -bottom-[7px] -right-2 flex size-[17px] items-center justify-center rounded-full border border-[#8b8b8b] bg-[#2c2c2e] text-[11px] font-semibold leading-none">19</span></span>
        <span className="mr-1 h-10 w-px bg-[#5a5a5a]" />
      </div>
    </footer>
  );
}

export default function App() {
  return (
    <div className="flex h-screen flex-col overflow-hidden">
      <div className="relative min-h-0 flex-1">
        <EditorBackdrop />
        <StarWindow />
      </div>
      <Taskbar />
    </div>
  );
}
